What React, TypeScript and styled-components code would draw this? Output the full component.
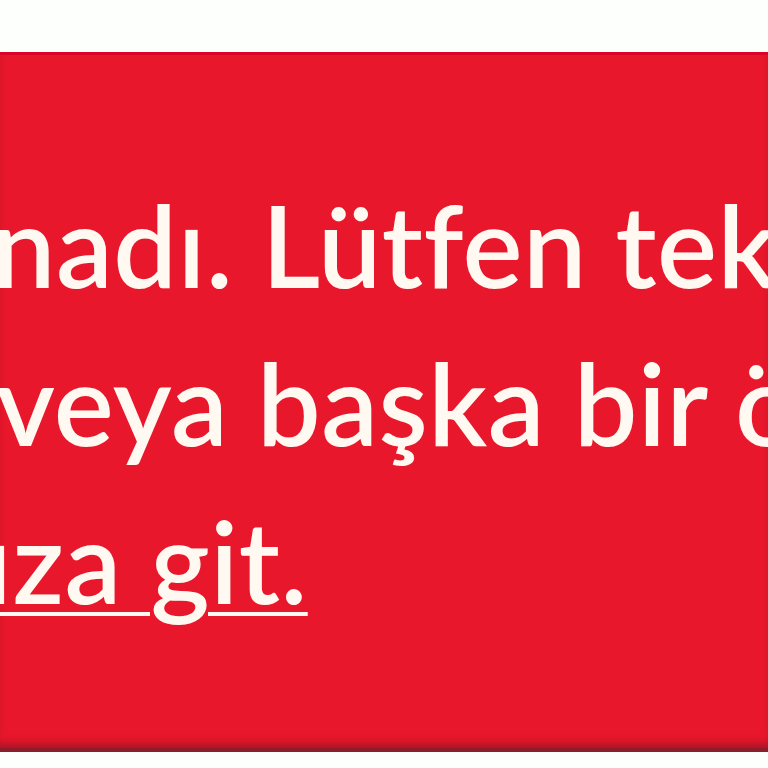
import React from "react";
import styled, { createGlobalStyle } from "styled-components";

const GlobalStyle = createGlobalStyle`
  html, body {
    margin: 0;
    padding: 0;
    background: #ffffff;
  }
  body {
    font-family: Lato, "Open Sans", "Liberation Sans", sans-serif;
  }
`;

const Page = styled.div`
  width: 768px;
  height: 768px;
  padding-top: 52px;
  box-sizing: border-box;
  overflow: hidden;
  background: #fdfffd;
`;

const Banner = styled.div`
  height: 700px;
  box-sizing: border-box;
  background: #e9172b;
  border-top: 3px solid #dc0329;
  border-bottom: 4px solid #8e1d2b;
  box-shadow: inset 0 -8px 8px -4px rgba(120, 20, 35, 0.6);
  padding-top: 110px;
  overflow: hidden;
`;

const Message = styled.p`
  margin: 0;
  color: #fff9f2;
  font-size: 113px;
  font-weight: 600;
  line-height: 158px;
  letter-spacing: 0.5px;
`;

const Line = styled.span<{ $shift: number }>`
  display: block;
  white-space: nowrap;
  margin-left: ${(p) => p.$shift}px;
`;

// hidden leading part of a line, it runs out to the left of the visible text
const Cut = styled.span`
  display: inline-block;
  width: 0;
  direction: rtl;
`;

const Link = styled.a`
  color: inherit;
  text-decoration: underline;
  text-decoration-thickness: 4px;
  text-underline-offset: 8px;
`;

const App: React.FC = () => {
  return (
    <Page>
      <GlobalStyle />
      <Banner>
        <Message>
          <Line $shift={-8}>
            <Cut>Ödeme alı</Cut>nadı. Lütfen tekrar deneyin
          </Line>
          <Line $shift={-4}>
            <Cut>deneyin</Cut>veya başka bir ödeme yöntemi
          </Line>
          <Line $shift={-16}>
            <Link href="#">ıza git.</Link>
          </Line>
        </Message>
      </Banner>
    </Page>
  );
};

export default App;
